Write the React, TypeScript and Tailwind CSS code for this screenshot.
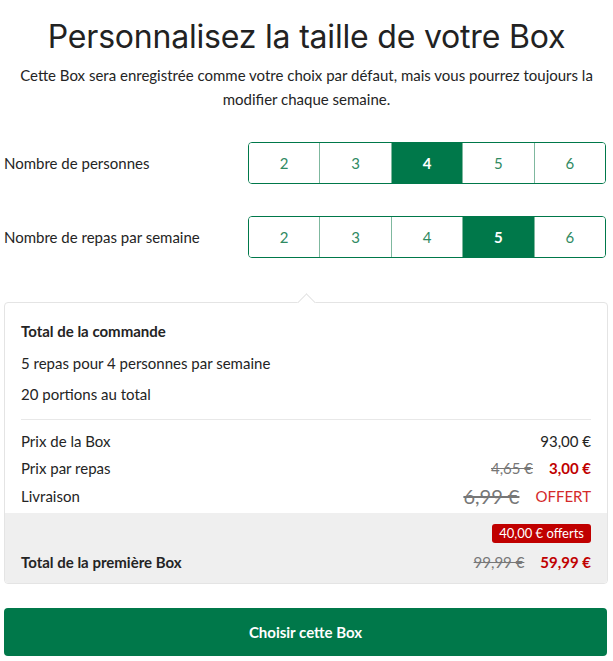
import React, { useState } from 'react';

const GREEN = 'bg-[#00784a]';

type SegmentProps = {
  options: number[];
  value: number;
  onChange: (v: number) => void;
};

const Segment = ({ options, value, onChange }: SegmentProps) => (
  <div className="flex w-[358px] h-[42px] rounded border border-[#00784a] overflow-hidden">
    {options.map((o, i) => (
      <button
        key={o}
        type="button"
        onClick={() => onChange(o)}
        className={
          'flex-1 flex items-center justify-center text-[15px] ' +
          (i > 0 ? 'border-l border-[#7fb89f] ' : '') +
          (o === value ? `${GREEN} text-white font-bold` : 'bg-white text-[#2f8a62]')
        }
      >
        {o}
      </button>
    ))}
  </div>
);

export default function App() {
  const [people, setPeople] = useState(4);
  const [meals, setMeals] = useState(5);

  return (
    <div className="w-[613px] h-[661px] bg-white text-[#242424] font-['Lato',sans-serif] overflow-hidden">
      <h1 className="pt-[17px] text-center text-[32px] leading-[40px] font-['Inter',sans-serif] font-normal tracking-[-0.2px] text-[#222]">
        Personnalisez la taille de votre Box
      </h1>
      <p className="mt-[6px] px-4 text-center text-[15px] leading-[24px]">
        Cette Box sera enregistrée comme votre choix par défaut, mais vous pourrez toujours la modifier chaque semaine.
      </p>

      <div className="mt-[31px] flex items-center justify-between pl-[4px] pr-[7px]">
        <span className="text-[15px]">Nombre de personnes</span>
        <Segment options={[2, 3, 4, 5, 6]} value={people} onChange={setPeople} />
      </div>
      <div className="mt-[32px] flex items-center justify-between pl-[4px] pr-[7px]">
        <span className="text-[15px]">Nombre de repas par semaine</span>
        <Segment options={[2, 3, 4, 5, 6]} value={meals} onChange={setMeals} />
      </div>

      <div className="relative mt-[44px] mx-[4px] mr-[5px] rounded border border-[#e4e4e4] bg-white">
        <div className="absolute -top-[7px] left-[295px] w-[13px] h-[13px] rotate-45 bg-white border-l border-t border-[#e4e4e4]" />
        <div className="relative px-[16px] pt-[17px]">
          <div className="text-[15px] font-bold leading-[22px]">Total de la commande</div>
          <div className="mt-[10px] text-[15px] leading-[22px]">
            5 repas pour {people} personnes par semaine
          </div>
          <div className="mt-[9px] text-[15px] leading-[22px]">{people * meals} portions au total</div>
          <div className="mt-[14px] border-t border-[#e8e8e8]" />
          <div className="pt-[10px] pb-[5px] flex flex-col gap-[5px] text-[15px] leading-[22px]">
            <div className="flex justify-between">
              <span>Prix de la Box</span>
              <span>93,00 €</span>
            </div>
            <div className="flex justify-between">
              <span>Prix par repas</span>
              <span className="flex gap-[16px]">
                <span className="line-through text-[#777]">4,65 €</span>
                <span className="font-bold text-[#c00000]">3,00 €</span>
              </span>
            </div>
            <div className="flex justify-between items-center">
              <span>Livraison</span>
              <span className="flex items-center gap-[16px]">
                <span className="line-through text-[#777] text-[20px] leading-[24px]">6,99 €</span>
                <span className="text-[#d42a2a]">OFFERT</span>
              </span>
            </div>
          </div>
        </div>
        <div className="bg-[#efefef] rounded-b px-[16px] pt-[11px] pb-[10px]">
          <div className="flex justify-end">
            <span className="rounded-[3px] bg-[#c00000] text-white text-[13px] leading-[19px] px-[7px]">
              40,00 € offerts
            </span>
          </div>
          <div className="mt-[8px] flex justify-between text-[15px] leading-[22px]">
            <span className="font-bold">Total de la première Box</span>
            <span className="flex gap-[16px]">
              <span className="line-through text-[#777]">99,99 €</span>
              <span className="font-bold text-[#c00000]">59,99 €</span>
            </span>
          </div>
        </div>
      </div>

      <button
        type="button"
        className={`mt-[24px] mx-[4px] w-[603px] h-[48px] rounded ${GREEN} text-white font-bold text-[15px]`}
      >
        Choisir cette Box
      </button>
    </div>
  );
}
